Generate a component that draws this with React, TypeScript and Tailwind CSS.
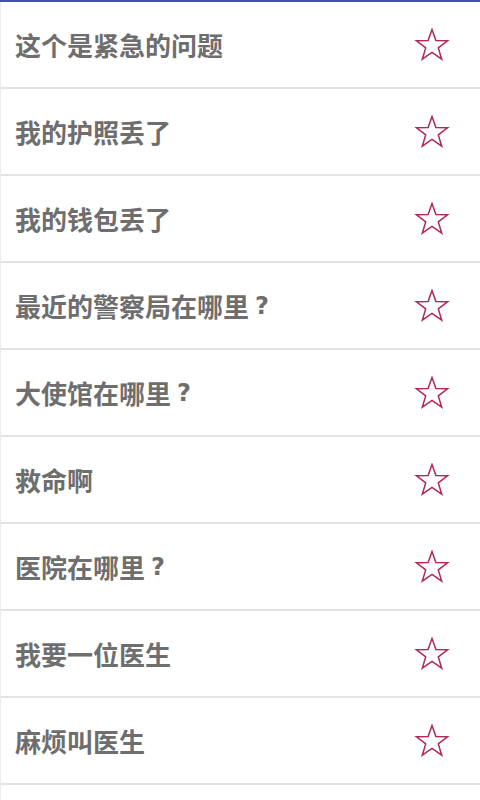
import React from 'react';

const phrases = [
  '这个是紧急的问题',
  '我的护照丢了',
  '我的钱包丢了',
  '最近的警察局在哪里？',
  '大使馆在哪里？',
  '救命啊',
  '医院在哪里？',
  '我要一位医生',
  '麻烦叫医生',
];

const StarOutline = () => (
  <svg width="36" height="34" viewBox="0 0 36 34" fill="none">
    <path
      d="M18 1.5 L21.9 12.6 L33.6 12.8 L24.3 19.9 L27.7 31.2 L18 24.5 L8.3 31.2 L11.7 19.9 L2.4 12.8 L14.1 12.6 Z"
      stroke="#b0275a"
      strokeWidth="1.5"
      strokeLinejoin="miter"
    />
  </svg>
);

// the screenshot's full-width question mark sits centred in a full cell
const Phrase = ({ text }: { text: string }) => {
  const q = text.endsWith('？');
  return (
    <span className="flex items-center text-[26px] font-bold text-[#6e6e6e] leading-none">
      {q ? text.slice(0, -1) : text}
      {q && (
        <span className="inline-block w-[26px] text-center font-['DejaVu_Sans',sans-serif] text-[24px] font-bold">
          ?
        </span>
      )}
    </span>
  );
};

export default function App() {
  return (
    <div
      lang="zh-CN"
      className="w-[480px] h-[800px] overflow-hidden bg-white"
      style={{ fontFamily: '"Noto Sans CJK SC", "Noto Sans", sans-serif' }}
    >
      <div className="h-[2px] bg-[#3f51b5]" />
      <ul className="border-l border-[#ececec]">
        {phrases.map((p) => (
          <li
            key={p}
            className="h-[87px] flex items-center justify-between pl-[14px] pr-[30px] border-b-2 border-[#e3e3e3]"
          >
            <Phrase text={p} />
            <StarOutline />
          </li>
        ))}
        <li className="h-[87px]" />
      </ul>
    </div>
  );
}
